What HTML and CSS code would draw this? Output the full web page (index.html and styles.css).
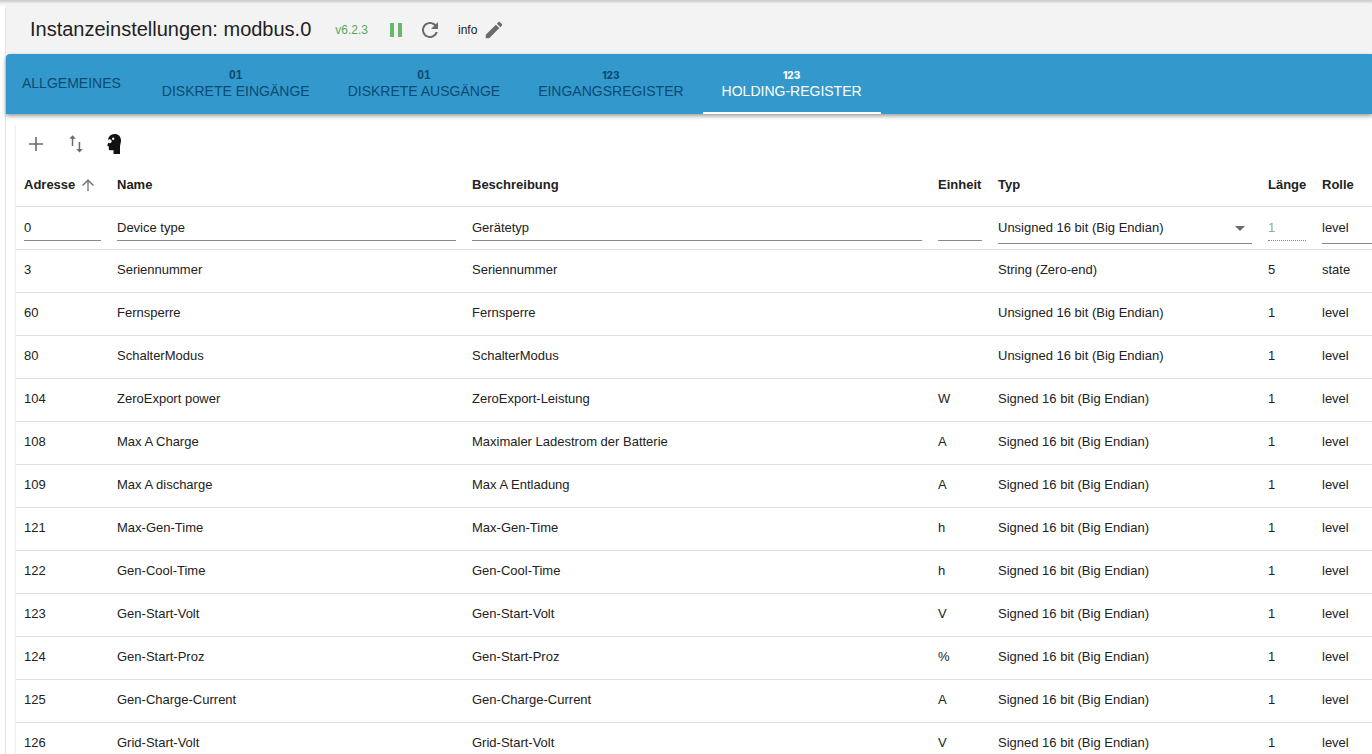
FILE: index.html
```html
<!DOCTYPE html>
<html lang="de">
<head>
<meta charset="utf-8">
<title>Instanzeinstellungen: modbus.0</title>
<link rel="stylesheet" href="styles.css">
</head>
<body>
<div class="topline"></div>
<main class="panel">
  <header class="titlebar">
    <h1 class="title">Instanzeinstellungen: modbus.0</h1>
    <span class="version">v6.2.3</span>
    <button class="icon-btn pause" type="button" aria-label="Pause"><svg viewBox="0 0 24 24"><path d="M6 19h4V5H6v14zm8-14v14h4V5h-4z"/></svg></button>
    <button class="icon-btn refresh" type="button" aria-label="Neu starten"><svg viewBox="0 0 24 24"><path d="M17.65 6.35C16.2 4.9 14.21 4 12 4c-4.42 0-7.99 3.58-7.99 8s3.57 8 7.99 8c3.73 0 6.84-2.55 7.73-6h-2.08c-.82 2.33-3.04 4-5.65 4-3.31 0-6-2.69-6-6s2.69-6 6-6c1.66 0 3.14.69 4.22 1.78L13 11h7V4l-2.35 2.35z"/></svg></button>
    <span class="loglevel">info</span>
    <button class="icon-btn edit" type="button" aria-label="Bearbeiten"><svg viewBox="0 0 24 24"><path d="M3 17.25V21h3.75L17.81 9.94l-3.75-3.75L3 17.25zM20.71 7.04c.39-.39.39-1.02 0-1.41l-2.34-2.34c-.39-.39-1.02-.39-1.41 0l-1.83 1.83 3.75 3.75 1.83-1.83z"/></svg></button>
  </header>

  <nav class="tabs" role="tablist">
    <button class="tab" type="button" role="tab">ALLGEMEINES</button>
    <button class="tab" type="button" role="tab"><span class="digits binary">01</span>DISKRETE EINGÄNGE</button>
    <button class="tab" type="button" role="tab"><span class="digits binary">01</span>DISKRETE AUSGÄNGE</button>
    <button class="tab" type="button" role="tab"><span class="digits">123</span>EINGANGSREGISTER</button>
    <button class="tab active" type="button" role="tab" aria-selected="true"><span class="digits">123</span>HOLDING-REGISTER</button>
  </nav>

  <section class="sheet">
    <div class="toolbar">
      <button class="icon-btn" type="button" aria-label="Hinzufügen"><svg viewBox="0 0 24 24"><path d="M19 12.8h-6.2V19h-1.6v-6.2H5v-1.6h6.2V5h1.6v6.2H19z"/></svg></button>
      <button class="icon-btn" type="button" aria-label="Importieren und exportieren"><svg viewBox="0 0 24 24"><path d="M16.2 17V10h-1.500v7h-2.500l3.300 3.600L18.800 17zM8.600 3.200L5.300 6.700h2.500V14h1.500V6.700h2.500z"/></svg></button>
      <button class="icon-btn head" type="button" aria-label="Expertenmodus"><svg viewBox="0 0 24 24"><path d="M12.500 2C16.500 2 19 4.700 19 8.500C19 11 18 12.500 18 15V22H11.500V18.200H7.800Q6.800 18.200 6.800 17V14.500L5.200 13.600L6.200 11C5 6 8 2 12.500 2z"/><g class="gear"><circle cx="7.600" cy="9.300" r="2"/><circle cx="11.200" cy="6.700" r="1.200"/></g></svg></button>
    </div>
    <table class="registers">
      <colgroup><col class="c-addr"><col class="c-name"><col><col class="c-unit"><col class="c-type"><col class="c-len"><col class="c-role"></colgroup>
      <thead>
        <tr><th aria-sort="ascending"><button class="sort" type="button">Adresse<svg viewBox="0 0 24 24"><path d="M4 12l1.410 1.410L11.100 7.800V20h1.800V7.800l5.700 5.600L20 12l-8-8-8 8z"/></svg></button></th><th>Name</th><th>Beschreibung</th><th>Einheit</th><th>Typ</th><th>Länge</th><th>Rolle</th></tr>
      </thead>
      <tbody>
        <tr>
          <td><input class="field" aria-label="Adresse" value="0"></td>
          <td><input class="field" aria-label="Name" value="Device type"></td>
          <td><input class="field" aria-label="Beschreibung" value="Gerätetyp"></td>
          <td><input class="field" aria-label="Einheit" value=""></td>
          <td><div class="select"><select class="field" aria-label="Typ"><option>Unsigned 16 bit (Big Endian)</option></select><svg viewBox="0 0 24 24"><path d="M7 10l5 5 5-5z"/></svg></div></td>
          <td><input class="field" aria-label="Länge" value="1" disabled></td>
          <td><div class="select"><select class="field" aria-label="Rolle"><option>level</option></select></div></td>
        </tr>
        <tr><td>3</td><td>Seriennummer</td><td>Seriennummer</td><td></td><td>String (Zero-end)</td><td>5</td><td>state</td></tr>
        <tr><td>60</td><td>Fernsperre</td><td>Fernsperre</td><td></td><td>Unsigned 16 bit (Big Endian)</td><td>1</td><td>level</td></tr>
        <tr><td>80</td><td>SchalterModus</td><td>SchalterModus</td><td></td><td>Unsigned 16 bit (Big Endian)</td><td>1</td><td>level</td></tr>
        <tr><td>104</td><td>ZeroExport power</td><td>ZeroExport-Leistung</td><td>W</td><td>Signed 16 bit (Big Endian)</td><td>1</td><td>level</td></tr>
        <tr><td>108</td><td>Max A Charge</td><td>Maximaler Ladestrom der Batterie</td><td>A</td><td>Signed 16 bit (Big Endian)</td><td>1</td><td>level</td></tr>
        <tr><td>109</td><td>Max A discharge</td><td>Max A Entladung</td><td>A</td><td>Signed 16 bit (Big Endian)</td><td>1</td><td>level</td></tr>
        <tr><td>121</td><td>Max-Gen-Time</td><td>Max-Gen-Time</td><td>h</td><td>Signed 16 bit (Big Endian)</td><td>1</td><td>level</td></tr>
        <tr><td>122</td><td>Gen-Cool-Time</td><td>Gen-Cool-Time</td><td>h</td><td>Signed 16 bit (Big Endian)</td><td>1</td><td>level</td></tr>
        <tr><td>123</td><td>Gen-Start-Volt</td><td>Gen-Start-Volt</td><td>V</td><td>Signed 16 bit (Big Endian)</td><td>1</td><td>level</td></tr>
        <tr><td>124</td><td>Gen-Start-Proz</td><td>Gen-Start-Proz</td><td>%</td><td>Signed 16 bit (Big Endian)</td><td>1</td><td>level</td></tr>
        <tr><td>125</td><td>Gen-Charge-Current</td><td>Gen-Charge-Current</td><td>A</td><td>Signed 16 bit (Big Endian)</td><td>1</td><td>level</td></tr>
        <tr><td>126</td><td>Grid-Start-Volt</td><td>Grid-Start-Volt</td><td>V</td><td>Signed 16 bit (Big Endian)</td><td>1</td><td>level</td></tr>
      </tbody>
    </table>
  </section>
</main>
</body>
</html>
```
FILE: styles.css
```css
* { box-sizing: border-box; }

body {
  margin: 0;
  height: 100vh;
  overflow: hidden;
  background: #fff;
  color: #222;
  font: 13px/20px "Liberation Sans", Arial, sans-serif;
}

button, input, select { font: inherit; color: inherit; }
button { padding: 0; border: 0; background: none; cursor: pointer; }
svg { display: block; width: 24px; height: 24px; fill: currentColor; }

.topline {
  height: 6px;
  background: linear-gradient(#c8c8c8, #f6f6f6 70%);
}

.panel {
  margin-left: 6px;
  box-shadow: 0 1px 2px rgba(0, 0, 0, 0.3);
}

.titlebar {
  display: flex;
  align-items: center;
  height: 48px;
  padding-left: 24px;
  background: #f3f3f3;
}

.title { margin: 0 24px 2px 0; font-size: 20px; line-height: 24px; font-weight: 400; }
.version { margin-right: 16px; color: #56a85a; font-size: 12px; }
.icon-btn { color: #6b6b6b; }
.pause { margin-right: 10px; color: #66b86a; }
.refresh { margin-right: 16px; }
.loglevel { margin-right: 6px; font-size: 12px; }
.edit svg { width: 22px; height: 22px; }

.tabs {
  position: relative;
  display: flex;
  height: 60px;
  border-radius: 4px 0 0 0;
  background: #3399cc;
  box-shadow: 0 2px 4px rgba(0, 0, 0, 0.4);
}

.tab {
  display: flex;
  flex-direction: column;
  align-items: center;
  justify-content: center;
  padding: 0 19px;
  border-bottom: 2px solid transparent;
  color: #0b4a73;
  font-size: 14px;
  line-height: 16px;
}
.tab:first-child { padding: 0 22px 0 16px; }
.tab.active { color: #fff; border-color: #fff; }

.digits { font: 800 10px/16px Inter, sans-serif; }
.binary { font: 700 12px/16px "Liberation Sans", Arial, sans-serif; }

.sheet {
  margin: 10px 0 0 10px;
  box-shadow: 0 1px 2px rgba(0, 0, 0, 0.2);
}

.toolbar { display: flex; gap: 16px; height: 40px; padding: 0 8px; }
.toolbar .head { margin-left: -2px; }
.head { color: #111; }
.head .gear { fill: #fff; }

.registers { width: 100%; table-layout: fixed; border-collapse: separate; border-spacing: 0; }
.c-addr { width: 93px; }
.c-name { width: 355px; }
.c-unit { width: 60px; }
.c-type { width: 270px; }
.c-len { width: 54px; }
.c-role { width: 58px; }

th, td {
  height: 43px;
  padding: 0 8px;
  border-bottom: 1px solid #e0e0e0;
  text-align: left;
  vertical-align: middle;
  white-space: nowrap;
}
tr > :last-child { padding-right: 0; }
tbody tr:not(:first-child) td { padding-bottom: 2px; }

.sort { display: flex; align-items: center; gap: 4px; font-weight: 700; }
.sort svg { width: 18px; height: 18px; color: #757575; }

.field {
  display: block;
  width: 100%;
  height: 26px;
  padding: 0;
  border: 0;
  border-bottom: 1px solid #8a8a8a;
  border-radius: 0;
  outline: 0;
  background: none;
}
.field:disabled { border-bottom-style: dotted; color: #a0a0a0; }

.select { display: grid; align-items: center; }
.select > * { grid-area: 1 / 1; }
.select .field { appearance: none; height: 32px; }
.select svg { justify-self: end; color: #6b6b6b; pointer-events: none; }
```
